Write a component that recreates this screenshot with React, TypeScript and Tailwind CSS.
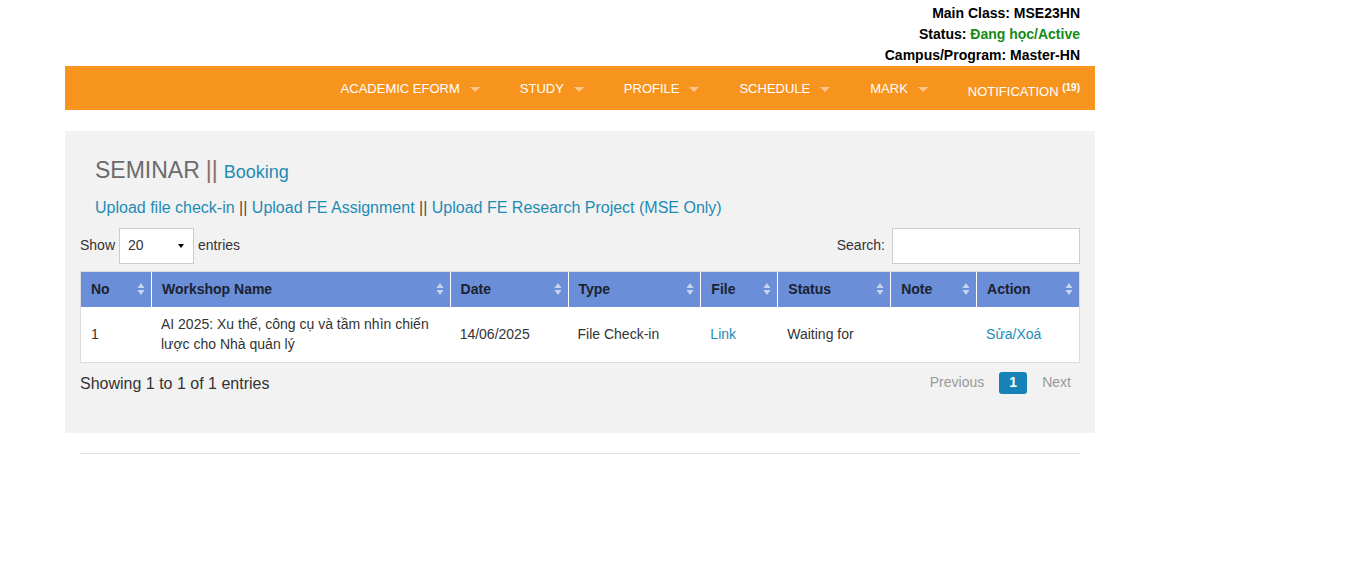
import React from "react";

const navItems = ["ACADEMIC EFORM", "STUDY", "PROFILE", "SCHEDULE", "MARK"];

const columns = [
  { label: "No", w: "w-[70px]" },
  { label: "Workshop Name", w: "w-[299px]" },
  { label: "Date", w: "w-[118px]" },
  { label: "Type", w: "w-[133px]" },
  { label: "File", w: "w-[77px]" },
  { label: "Status", w: "w-[113px]" },
  { label: "Note", w: "w-[86px]" },
  { label: "Action", w: "w-[103px]" },
];

const SortIcon = () => (
  <svg width="8" height="14" viewBox="0 0 8 14" className="shrink-0">
    <path d="M4 1 L7.5 6 H0.5 Z" fill="#c9d6f0" />
    <path d="M4 13 L7.5 8 H0.5 Z" fill="#c9d6f0" />
  </svg>
);

const Caret = () => (
  <span className="ml-[10px] inline-block h-0 w-0 border-x-[5px] border-t-[5px] border-x-transparent border-t-[#fbc88a]" />
);

export default function App() {
  return (
    <div className="min-h-[562px] bg-white font-['Liberation_Sans',Arial,sans-serif] text-[14px] text-[#333]">
      <div className="w-[1030px] ml-[65px]">
        {/* student info */}
        <div className="pt-[3px] pr-[15px] text-right text-[14px] font-bold leading-[21px] text-black">
          <div>Main Class: MSE23HN</div>
          <div>
            Status: <span className="text-[#168a16]">Đang học/Active</span>
          </div>
          <div>Campus/Program: Master-HN</div>
        </div>

        {/* nav */}
        <div className="flex h-[44px] items-center justify-end bg-[#f7941d] pr-[15px] pt-[2px] text-[13px] text-white">
          {navItems.map((item) => (
            <div key={item} className="flex items-center mr-[40px]">
              <span>{item}</span>
              <Caret />
            </div>
          ))}
          <div className="mt-[5px]">
            NOTIFICATION{" "}
            <sup className="text-[10px] font-bold">(19)</sup>
          </div>
        </div>

        {/* content panel */}
        <div className="mt-[21px] bg-[#f2f2f2] px-[15px] pt-[22px] h-[302px]">
          <div className="pl-[15px] flex items-baseline">
            <span className="text-[23px] text-[#6b6b6b]">SEMINAR</span>
            <span className="ml-[6px] text-[23px] text-[#8a6f5e]">||</span>
            <a className="ml-[6px] text-[18px] text-[#1e8bb5]">Booking</a>
          </div>
          <div className="mt-[8px] pl-[15px] text-[16px]">
            <a className="text-[#1e8bb5]">Upload file check-in</a>
            <span className="text-[#5a4a3f]"> || </span>
            <a className="text-[#1e8bb5]">Upload FE Assignment</a>
            <span className="text-[#5a4a3f]"> || </span>
            <a className="text-[#1e8bb5]">Upload FE Research Project (MSE Only)</a>
          </div>

          <div className="mt-[8px] flex items-center justify-between">
            <div className="flex items-center text-[14px] text-[#333]">
              <span>Show</span>
              <div className="mx-[4px] flex h-[36px] w-[75px] items-center justify-between border border-[#ccc] bg-white pl-[8px] pr-[9px]">
                <span>20</span>
                <span className="inline-block h-0 w-0 border-x-[3px] border-t-[4px] border-x-transparent border-t-black" />
              </div>
              <span>entries</span>
            </div>
            <div className="flex items-center text-[14px] text-[#333]">
              <span className="mr-[7px]">Search:</span>
              <div className="h-[36px] w-[188px] border border-[#ccc] bg-white" />
            </div>
          </div>

          <div className="mt-[7px] border border-[#dcdcdc] bg-white">
            <div className="flex h-[35px] bg-[#6a8ed8] text-[14px] font-bold text-[#1c2230]">
              {columns.map((c, i) => (
                <div
                  key={c.label}
                  className={`${c.w} flex items-center justify-between pl-[10px] pr-[6px] ${i > 0 ? "border-l border-white" : ""}`}
                >
                  <span>{c.label}</span>
                  <SortIcon />
                </div>
              ))}
            </div>
            <div className="flex h-[55px] items-center text-[14px] leading-[20px] text-[#333]">
              <div className="w-[70px] pl-[10px]">1</div>
              <div className="w-[299px] pl-[10px] pr-[10px]">
                AI 2025: Xu thế, công cụ và tầm nhìn chiến lược cho Nhà quản lý
              </div>
              <div className="w-[118px] pl-[10px]">14/06/2025</div>
              <div className="w-[133px] pl-[10px]">File Check-in</div>
              <div className="w-[77px] pl-[10px] text-[#1e8bb5]">Link</div>
              <div className="w-[113px] pl-[10px]">Waiting for</div>
              <div className="w-[86px] pl-[10px]"></div>
              <div className="w-[103px] pl-[10px] text-[#1e8bb5]">Sửa/Xoá</div>
            </div>
          </div>

          <div className="mt-[9px] flex items-start justify-between">
            <div className="text-[16px] text-[#333]">Showing 1 to 1 of 1 entries</div>
            <div className="flex items-center text-[14px] pr-[9px]">
              <span className="text-[#999]">Previous</span>
              <span className="ml-[15px] flex h-[22px] w-[28px] items-center justify-center rounded-[3px] bg-[#1782b5] font-bold text-white">
                1
              </span>
              <span className="ml-[15px] text-[#999]">Next</span>
            </div>
          </div>
        </div>

        <div className="mx-[15px] mt-[20px] border-t border-[#e3e3e3]" />
      </div>
    </div>
  );
}
